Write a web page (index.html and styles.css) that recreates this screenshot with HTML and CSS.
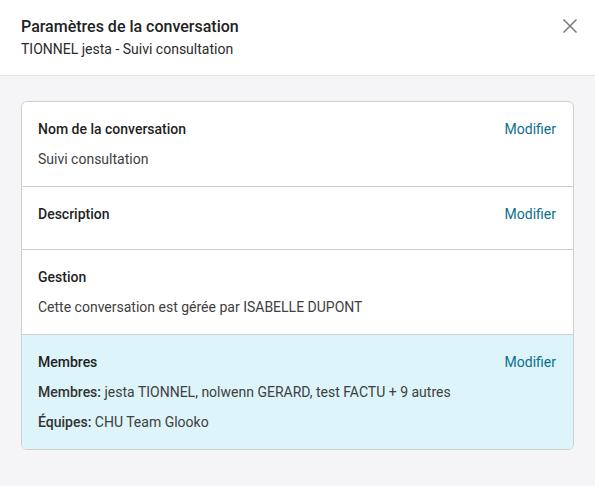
FILE: index.html
```html
<!DOCTYPE html>
<html lang="fr">
<head>
    <meta charset="UTF-8">
    <meta name="viewport" content="width=device-width, initial-scale=1.0">
    <title>Paramètres de la conversation</title>
    <link rel="stylesheet" href="styles.css">
</head>
<body>
    <div class="modal">
        <header class="modal-header">
            <div>
                <h1 class="modal-title">Paramètres de la conversation</h1>
                <p class="modal-subtitle">TIONNEL jesta - Suivi consultation</p>
            </div>
            <button class="close-btn" aria-label="Fermer">
                <svg width="16" height="16" viewBox="0 0 16 16">
                    <path d="M1.5 1.5 L14.5 14.5 M14.5 1.5 L1.5 14.5" stroke="#7a7a7a" stroke-width="1.5" fill="none"/>
                </svg>
            </button>
        </header>

        <div class="modal-body">
            <div class="card">
                <section class="section">
                    <div class="section-head">
                        <h2 class="section-label">Nom de la conversation</h2>
                        <a href="#" class="edit-link">Modifier</a>
                    </div>
                    <p class="section-value">Suivi consultation</p>
                </section>

                <section class="section">
                    <div class="section-head">
                        <h2 class="section-label">Description</h2>
                        <a href="#" class="edit-link">Modifier</a>
                    </div>
                    <p class="section-value empty"></p>
                </section>

                <section class="section">
                    <div class="section-head">
                        <h2 class="section-label">Gestion</h2>
                    </div>
                    <p class="section-value">Cette conversation est gérée par ISABELLE DUPONT</p>
                </section>

                <section class="section highlight">
                    <div class="section-head">
                        <h2 class="section-label">Membres</h2>
                        <a href="#" class="edit-link">Modifier</a>
                    </div>
                    <p class="section-value"><strong>Membres:</strong> jesta TIONNEL, nolwenn GERARD, test FACTU + 9 autres</p>
                    <p class="section-value"><strong>Équipes:</strong> CHU Team Glooko</p>
                </section>
            </div>
        </div>
    </div>
</body>
</html>
```

FILE: styles.css
```css
body {
    font-family: Roboto, "Liberation Sans", Arial, sans-serif;
    margin: 0;
    padding: 0;
    background-color: #f5f4f7;
    color: #222;
}
.modal {
    min-height: 486px;
    background-color: #f5f4f7;
}
.modal-header {
    display: flex;
    justify-content: space-between;
    align-items: flex-start;
    background-color: white;
    padding: 15px 17px 16px 21px;
    border-bottom: 1px solid #e6e6e9;
}
.modal-title {
    margin: 0;
    font-size: 16px;
    line-height: 24px;
    font-weight: 500;
    color: #222;
}
.modal-subtitle {
    margin: 0;
    font-size: 14px;
    line-height: 20px;
    color: #2b2b2b;
}
.close-btn {
    background: none;
    border: none;
    padding: 0;
    margin-top: 3px;
    width: 16px;
    height: 16px;
    cursor: pointer;
}
.modal-body {
    padding: 25px 21px 37px 21px;
}
.card {
    background-color: white;
    border: 1px solid #cfcfd2;
    border-radius: 6px;
    overflow: hidden;
}
.section {
    padding: 17px 16px 7px 16px;
    border-bottom: 1px solid #cfcfd2;
}
.section:last-child {
    border-bottom: none;
}
.section.highlight {
    background-color: #dcf4fa;
}
.section-head {
    display: flex;
    justify-content: space-between;
    align-items: center;
}
.section-label {
    margin: 0;
    font-size: 14px;
    line-height: 20px;
    font-weight: 500;
    color: #1f1f1f;
}
.edit-link {
    font-size: 14px;
    line-height: 20px;
    color: #0b6f8c;
    text-decoration: none;
    margin-right: 1px;
}
.section-value {
    margin: 10px 0 10px 0;
    font-size: 14px;
    line-height: 20px;
    color: #404040;
}
.section-value + .section-value {
    margin-top: 0;
}
.section-value.empty {
    margin: 0;
    height: 18px;
}
.section-value strong {
    font-weight: 500;
    color: #333;
}
```
